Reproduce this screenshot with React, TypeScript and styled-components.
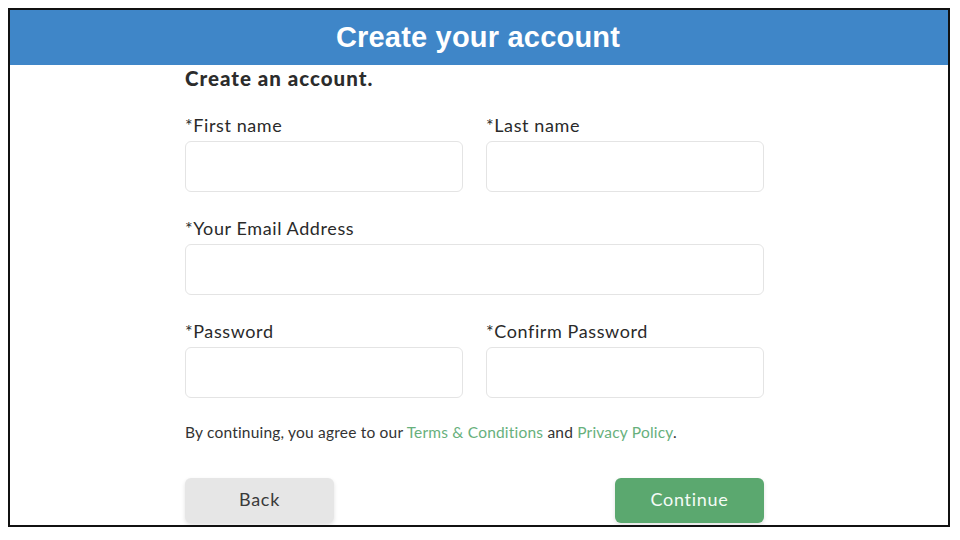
import React from "react";
import styled, { createGlobalStyle } from "styled-components";

const Global = createGlobalStyle`
  html, body { margin: 0; padding: 0; background: #ffffff; }
  * { box-sizing: border-box; }
`;

const Frame = styled.div`
  margin: 8px 0 0 8px;
  width: 942px;
  height: 519px;
  border: 2px solid #111;
  overflow: hidden;
  background: #fff;
  display: flex;
  flex-direction: column;
`;

const Header = styled.header`
  height: 55px;
  flex: none;
  background: #3f86c8;
  display: flex;
  align-items: center;
  justify-content: center;
`;

const Title = styled.h1`
  margin: 0 0 0 -2px;
  font-family: "Liberation Sans", Arial, sans-serif;
  font-weight: 700;
  font-size: 29px;
  color: #ffffff;
  letter-spacing: 0.2px;
`;

const Form = styled.form`
  width: 579px;
  margin-left: 175px;
  display: flex;
  flex-direction: column;
  font-family: Lato, "Noto Sans", sans-serif;
  color: #2f2f2f;
`;

const Heading = styled.h2`
  margin: 0 0 24px;
  font-size: 20.5px;
  line-height: 26px;
  font-weight: 900;
  letter-spacing: 1px;
  color: #2c2c2c;
`;

const Row = styled.div<{ $cols: number }>`
  display: grid;
  grid-template-columns: repeat(${(p) => p.$cols}, 1fr);
  column-gap: 23px;
  margin-bottom: 26px;
`;

const Field = styled.label`
  display: flex;
  flex-direction: column;
`;

const LabelText = styled.span`
  font-size: 18px;
  line-height: 22px;
  letter-spacing: 0.6px;
  margin: -1px 0 5px;
  color: #2a2a2a;
`;

const Input = styled.input`
  height: 51px;
  border: 1.5px solid #e4e4e4;
  border-radius: 6px;
  background: #fff;
  outline: none;
  font-size: 16px;
  padding: 0 12px;
`;

const Terms = styled.p`
  margin: -2px 0 36px;
  font-size: 15.5px;
  line-height: 20px;
  letter-spacing: 0.2px;
  color: #333;
`;

const Link = styled.a`
  color: #67b07c;
  text-decoration: none;
`;

const Buttons = styled.div`
  display: flex;
  justify-content: space-between;
`;

const Button = styled.button<{ $primary?: boolean }>`
  width: 149px;
  height: 45px;
  border: none;
  border-radius: 6px;
  font-family: Lato, "Noto Sans", sans-serif;
  font-size: 18px;
  letter-spacing: 0.7px;
  padding: 0 0 4px;
  background: ${(p) => (p.$primary ? "#5ba86f" : "#e6e6e6")};
  color: ${(p) => (p.$primary ? "#f4fbf6" : "#3a3a3a")};
  box-shadow: 0 2px 4px rgba(0, 0, 0, 0.12);
`;

const fields: { label: string; type: string }[][] = [
  [
    { label: "*First name", type: "text" },
    { label: "*Last name", type: "text" },
  ],
  [{ label: "*Your Email Address", type: "email" }],
  [
    { label: "*Password", type: "password" },
    { label: "*Confirm Password", type: "password" },
  ],
];

export default function App() {
  return (
    <>
      <Global />
      <Frame>
        <Header>
          <Title>Create your account</Title>
        </Header>
        <Form onSubmit={(e) => e.preventDefault()}>
          <Heading>Create an account.</Heading>
          {fields.map((row, i) => (
            <Row key={i} $cols={row.length}>
              {row.map((f) => (
                <Field key={f.label}>
                  <LabelText>{f.label}</LabelText>
                  <Input type={f.type} />
                </Field>
              ))}
            </Row>
          ))}
          <Terms>
            By continuing, you agree to our <Link>Terms &amp; Conditions</Link> and{" "}
            <Link>Privacy Policy</Link>.
          </Terms>
          <Buttons>
            <Button type="button">Back</Button>
            <Button type="submit" $primary>
              Continue
            </Button>
          </Buttons>
        </Form>
      </Frame>
    </>
  );
}
